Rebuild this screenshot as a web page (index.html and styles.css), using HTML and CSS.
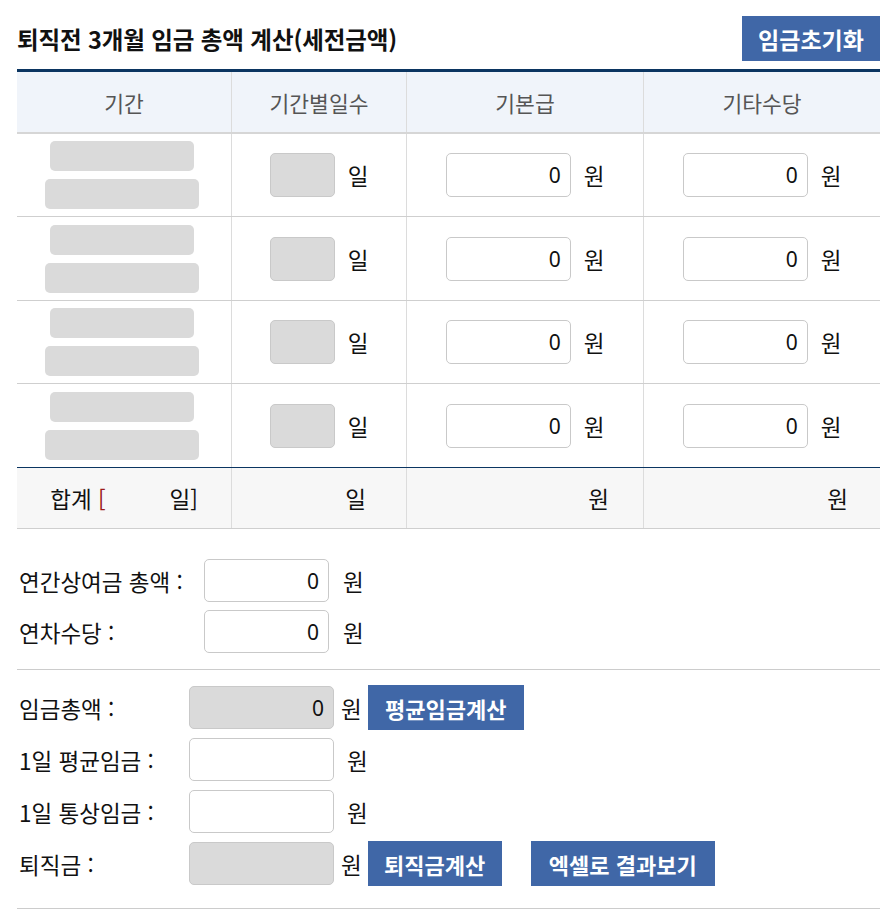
FILE: index.html
```html
<!DOCTYPE html>
<html lang="ko">
<head>
<meta charset="utf-8">
<title>퇴직금 계산</title>
<link rel="stylesheet" href="styles.css">
</head>
<body>
<div class="page">
  <div class="title-bar">
    <h2 class="title">퇴직전 3개월 임금 총액 계산(세전금액)</h2>
    <button class="btn btn-reset" type="button">임금초기화</button>
  </div>

  <div class="wage">
    <div class="row head">
      <div class="cell">기간</div>
      <div class="cell">기간별일수</div>
      <div class="cell">기본급</div>
      <div class="cell">기타수당</div>
    </div>

    <div class="row body-row">
      <div class="cell period"><span class="pbox p1"></span><span class="pbox p2"></span></div>
      <div class="cell"><span class="daybox"></span><span class="unit">일</span></div>
      <div class="cell"><input class="field" type="text" value="0"><span class="unit">원</span></div>
      <div class="cell"><input class="field" type="text" value="0"><span class="unit">원</span></div>
    </div>
    <div class="row body-row tall">
      <div class="cell period"><span class="pbox p1"></span><span class="pbox p2"></span></div>
      <div class="cell"><span class="daybox"></span><span class="unit">일</span></div>
      <div class="cell"><input class="field" type="text" value="0"><span class="unit">원</span></div>
      <div class="cell"><input class="field" type="text" value="0"><span class="unit">원</span></div>
    </div>
    <div class="row body-row">
      <div class="cell period"><span class="pbox p1"></span><span class="pbox p2"></span></div>
      <div class="cell"><span class="daybox"></span><span class="unit">일</span></div>
      <div class="cell"><input class="field" type="text" value="0"><span class="unit">원</span></div>
      <div class="cell"><input class="field" type="text" value="0"><span class="unit">원</span></div>
    </div>
    <div class="row body-row tall last">
      <div class="cell period"><span class="pbox p1"></span><span class="pbox p2"></span></div>
      <div class="cell"><span class="daybox"></span><span class="unit">일</span></div>
      <div class="cell"><input class="field" type="text" value="0"><span class="unit">원</span></div>
      <div class="cell"><input class="field" type="text" value="0"><span class="unit">원</span></div>
    </div>

    <div class="row sum-row">
      <div class="cell"><span>합계 <span class="br">[</span><span class="sum-days"></span>일]</span></div>
      <div class="cell right r2">일</div>
      <div class="cell right r3">원</div>
      <div class="cell right r4">원</div>
    </div>
  </div>

  <div class="extra">
    <div class="form-row">
      <span class="label">연간상여금 총액 :</span>
      <input class="field" type="text" value="0"><span class="unit">원</span>
    </div>
    <div class="form-row">
      <span class="label">연차수당 :</span>
      <input class="field" type="text" value="0"><span class="unit">원</span>
    </div>
  </div>

  <div class="result">
    <div class="res-row">
      <span class="label">임금총액 :</span>
      <input class="field wide disabled" type="text" value="0"><span class="unit tight">원</span>
      <button class="btn btn-calc btn-avg" type="button">평균임금계산</button>
    </div>
    <div class="res-row">
      <span class="label">1일 평균임금 :</span>
      <input class="field wide" type="text" value=""><span class="unit">원</span>
    </div>
    <div class="res-row">
      <span class="label">1일 통상임금 :</span>
      <input class="field wide" type="text" value=""><span class="unit">원</span>
    </div>
    <div class="res-row">
      <span class="label">퇴직금 :</span>
      <input class="field wide disabled" type="text" value=""><span class="unit tight">원</span>
      <button class="btn btn-calc btn-sev" type="button">퇴직금계산</button>
      <button class="btn btn-calc btn-excel" type="button">엑셀로 결과보기</button>
    </div>
  </div>
</div>
</body>
</html>
```

FILE: styles.css
```css
* { box-sizing: border-box; }

body {
  margin: 0;
  background: #fff;
  font-family: "Noto Sans CJK KR", "Noto Sans", sans-serif;
  color: #111;
}

.page {
  width: 863px;
  margin-left: 17px;
}

.title-bar {
  display: flex;
  align-items: center;
  justify-content: space-between;
  padding-top: 16px;
  height: 61px;
  margin-bottom: 8px;
}

.title {
  margin: 0;
  font-size: 23.5px;
  font-weight: 700;
  color: #111;
  letter-spacing: -0.1px;
}

.btn {
  border: 0;
  border-radius: 0;
  background: #4067a7;
  color: #fff;
  font-family: "Noto Sans CJK KR", "Noto Sans", sans-serif;
  font-weight: 700;
  height: 45px;
  padding: 0;
  cursor: pointer;
}

.btn-reset {
  width: 138px;
  font-size: 23px;
}

.btn-calc {
  font-size: 22px;
}

.btn-avg { width: 156px; }
.btn-sev { width: 134px; }
.btn-excel { width: 184px; }

.wage {
  border-top: 3px solid #0b3561;
}

.row {
  display: grid;
  grid-template-columns: 214px 175px 237px 237px;
}

.cell {
  display: flex;
  align-items: center;
  justify-content: center;
}

.cell + .cell {
  border-left: 1px solid #dcdcdc;
}

.head {
  height: 62px;
  background: #f0f4fa;
  border-bottom: 2px solid #d6d6d6;
  color: #555;
  font-size: 21.5px;
}

.body-row {
  height: 83px;
  border-bottom: 1px solid #cfcfcf;
  font-size: 22.5px;
}

.body-row.tall {
  height: 84px;
}

.body-row.last {
  border-bottom: 1px solid #0b3561;
}

.period {
  flex-direction: column;
  gap: 8px;
  padding-right: 4px;
}

.pbox {
  display: block;
  height: 30px;
  background: #dadada;
  border-radius: 5px;
}

.p1 { width: 144px; }
.p2 { width: 154px; }

.daybox {
  display: block;
  width: 65px;
  height: 44px;
  background: #dadada;
  border: 1px solid #c9c9c9;
  border-radius: 5px;
}

.unit {
  margin-left: 13px;
  font-size: 22.5px;
  color: #111;
}

.unit.tight {
  margin-left: 7px;
}

.field {
  width: 125px;
  height: 44px;
  border: 1px solid #c9c9c9;
  border-radius: 5px;
  background: #fff;
  text-align: right;
  padding: 0 9px 0 6px;
  font-family: "Noto Sans", "Noto Sans CJK KR", sans-serif;
  font-size: 21px;
  color: #111;
  outline: none;
}

.field.wide {
  width: 145px;
  height: 43px;
}

.field.disabled {
  background: #dadada;
}

.sum-row {
  height: 61px;
  background: #f7f7f7;
  border-bottom: 1px solid #cfcfcf;
  font-size: 22.5px;
}

.br {
  color: #9b1c1c;
}

.sum-days {
  display: inline-block;
  width: 64px;
}

.cell.right {
  justify-content: flex-end;
}

.r2 { padding-right: 40px; }
.r3 { padding-right: 34px; }
.r4 { padding-right: 32px; }

.label {
  padding-left: 2px;
  font-size: 22.5px;
  color: #111;
  white-space: nowrap;
}

.extra {
  padding-top: 30px;
  padding-bottom: 16px;
  border-bottom: 1px solid #cccccc;
  display: flex;
  flex-direction: column;
  gap: 8px;
}

.form-row {
  display: grid;
  grid-template-columns: 187px auto auto 1fr;
  align-items: center;
  height: 43px;
}

.form-row .field {
  height: 43px;
}

.form-row .unit {
  margin-left: 14px;
}

.result {
  padding-top: 15px;
  padding-bottom: 22px;
  border-bottom: 1px solid #cccccc;
  display: flex;
  flex-direction: column;
  gap: 7px;
}

.res-row {
  display: flex;
  align-items: center;
  height: 45px;
}

.res-row .label {
  width: 172px;
}

.res-row .btn-calc {
  margin-left: 6px;
}

.res-row .btn-excel {
  margin-left: 29px;
}
```
